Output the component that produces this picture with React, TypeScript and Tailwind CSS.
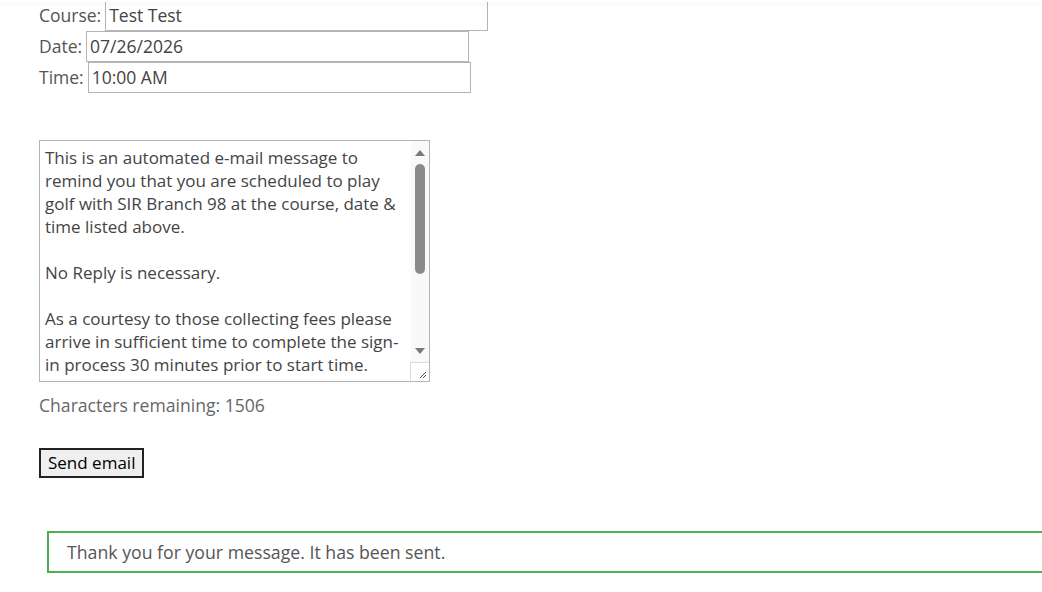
import React from "react";

const lines = [
  "This is an automated e-mail message to",
  "remind you that you are scheduled to play",
  "golf with SIR Branch 98 at the course, date &",
  "time listed above.",
  "",
  "No Reply is necessary.",
  "",
  "As a courtesy to those collecting fees please",
  "arrive in sufficient time to complete the sign-",
  "in process 30 minutes prior to start time.",
];

function Row({ label, value }: { label: string; value: string }) {
  return (
    <div className="flex items-center gap-[4px] h-[31px]">
      <span className="text-[17.5px] text-[#555]">{label}</span>
      <div className="w-[383px] h-[31px] border border-[#b4b4b4] bg-white flex items-center pl-[3px] text-[17.5px] text-[#444]">
        {value}
      </div>
    </div>
  );
}

export default function App() {
  return (
    <div
      className="relative w-[1042px] h-[592px] overflow-hidden bg-white"
      style={{ fontFamily: "'Open Sans', 'Liberation Sans', sans-serif" }}
    >
      <div className="absolute top-0 left-0 right-0 h-[2px] bg-white shadow-[0_2px_6px_rgba(0,0,0,0.07)] z-10" />
      <div className="pl-[39px]">
        <Row label="Course:" value="Test Test" />
        <Row label="Date:" value="07/26/2026" />
        <Row label="Time:" value="10:00 AM" />

        <div className="mt-[47px] w-[391px] h-[242px] border border-[#b4b4b4] flex bg-white">
          <div className="flex-1 overflow-hidden pl-[5px] pt-[5px] text-[17px] leading-[23px] text-[#444]">
            {lines.map((l, i) => (
              <div key={i} className="whitespace-nowrap h-[23px]">
                {l || "\u00a0"}
              </div>
            ))}
          </div>
          <div className="w-[18px] bg-[#f9f9f9] flex flex-col items-center relative">
            <svg width="12" height="8" viewBox="0 0 12 8" className="mt-[8px]">
              <polygon points="1,7 6,1 11,7" fill="#7a7a7a" />
            </svg>
            <div className="w-[10px] h-[110px] mt-[7px] rounded-t-[5px] rounded-b-[5px] bg-[#8a8a8a]" />
            <div className="flex-1" />
            <svg width="12" height="8" viewBox="0 0 12 8" className="mb-[26px]">
              <polygon points="1,1 11,1 6,7" fill="#7a7a7a" />
            </svg>
            <div className="absolute bottom-0 right-0 w-[19px] h-[19px] border-l border-t border-[#dcdcdc] bg-white">
              <svg width="18" height="18" viewBox="0 0 18 18">
                <line x1="9" y1="15" x2="15" y2="9" stroke="#555" strokeWidth="1" />
                <line x1="12" y1="15" x2="15" y2="12" stroke="#555" strokeWidth="1" />
              </svg>
            </div>
          </div>
        </div>

        <div className="mt-[12px] text-[17.6px] leading-[23px] text-[#666]">
          Characters remaining: 1506
        </div>

        <button className="mt-[31px] h-[30px] px-[7px] border-2 border-[#222] bg-[#efefef] text-[17px] text-black leading-[20px] flex items-center">
          Send email
        </button>

        <div className="mt-[53px] ml-[8px] w-[1100px] h-[42px] border-2 border-[#4caf50] pl-[18px] flex items-center text-[17.7px] text-[#555]">
          Thank you for your message. It has been sent.
        </div>
      </div>
    </div>
  );
}
